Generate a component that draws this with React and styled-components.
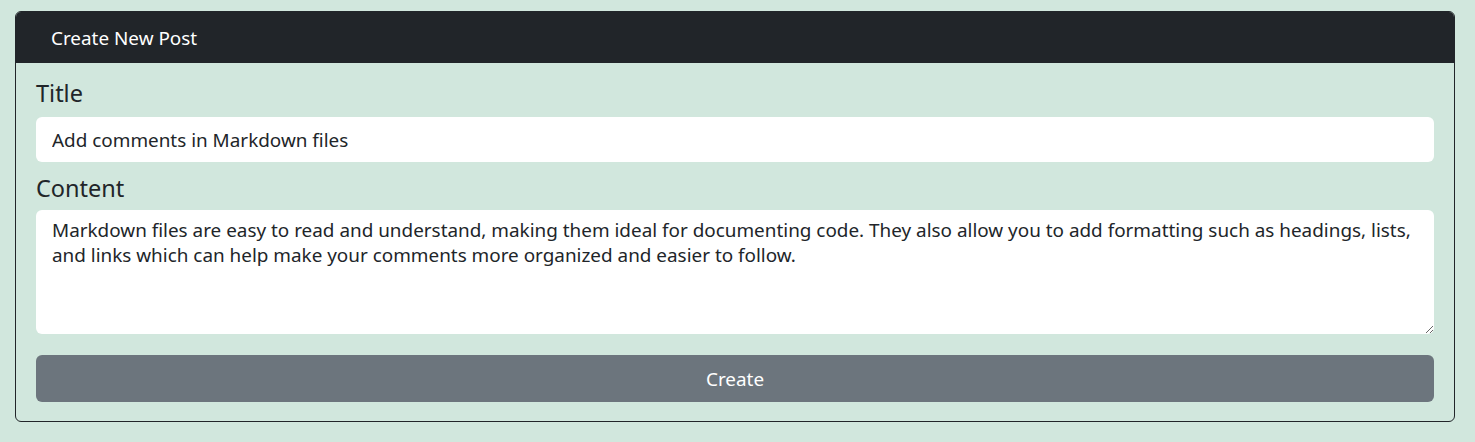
import React, { useState } from 'react';
import styled, { createGlobalStyle } from 'styled-components';

const GlobalStyle = createGlobalStyle`
  html, body {
    margin: 0;
    padding: 0;
    background: #d1e7dd;
    font-family: "Noto Sans", "Open Sans", sans-serif;
    color: #212529;
  }
  * { box-sizing: border-box; }
`;

const Page = styled.div`
  padding: 11px 20px 20px 15px;
`;

const Card = styled.div`
  border: 1px solid #212529;
  border-radius: 6px;
  overflow: hidden;
`;

const CardHeader = styled.div`
  height: 51px;
  background: #212529;
  color: #fff;
  display: flex;
  align-items: center;
  padding: 0 35px;
  font-size: 18.9px;
`;

const CardBody = styled.form`
  display: flex;
  flex-direction: column;
  padding: 17px 20px 19px 20px;
`;

const Group = styled.div`
  display: flex;
  flex-direction: column;
  margin-bottom: ${p => p.$last ? '0' : '13px'};
`;

const Label = styled.label`
  font-size: 23.5px;
  line-height: 26px;
  margin-bottom: ${p => p.$gap || 9}px;
`;

const Input = styled.input`
  height: 45px;
  border: none;
  border-radius: 6px;
  background: #fff;
  padding: 0 16px;
  font-family: inherit;
  font-size: 18.9px;
  color: #212529;
  outline: none;
`;

const TextArea = styled.textarea`
  height: 124px;
  border: none;
  border-radius: 6px;
  background: #fff;
  padding: 8px 16px;
  font-family: inherit;
  font-size: 18.9px;
  line-height: 25px;
  color: #212529;
  outline: none;
  resize: vertical;
`;

const Button = styled.button`
  margin-top: 21px;
  height: 47px;
  border: none;
  border-radius: 6px;
  background: #6c757d;
  color: #fff;
  font-family: inherit;
  font-size: 18.9px;
  cursor: pointer;
`;

export default function App() {
  const [title, setTitle] = useState('Add comments in Markdown files');
  const [content, setContent] = useState(
    'Markdown files are easy to read and understand, making them ideal for documenting code. They also allow you to add formatting such as headings, lists, and links which can help make your comments more organized and easier to follow.'
  );

  return (
    <Page>
      <GlobalStyle />
      <Card>
        <CardHeader>Create New Post</CardHeader>
        <CardBody onSubmit={e => e.preventDefault()}>
          <Group>
            <Label htmlFor="title" $gap={11}>Title</Label>
            <Input id="title" value={title} onChange={e => setTitle(e.target.value)} />
          </Group>
          <Group $last>
            <Label htmlFor="content">Content</Label>
            <TextArea id="content" value={content} onChange={e => setContent(e.target.value)} />
          </Group>
          <Button type="submit">Create</Button>
        </CardBody>
      </Card>
    </Page>
  );
}
